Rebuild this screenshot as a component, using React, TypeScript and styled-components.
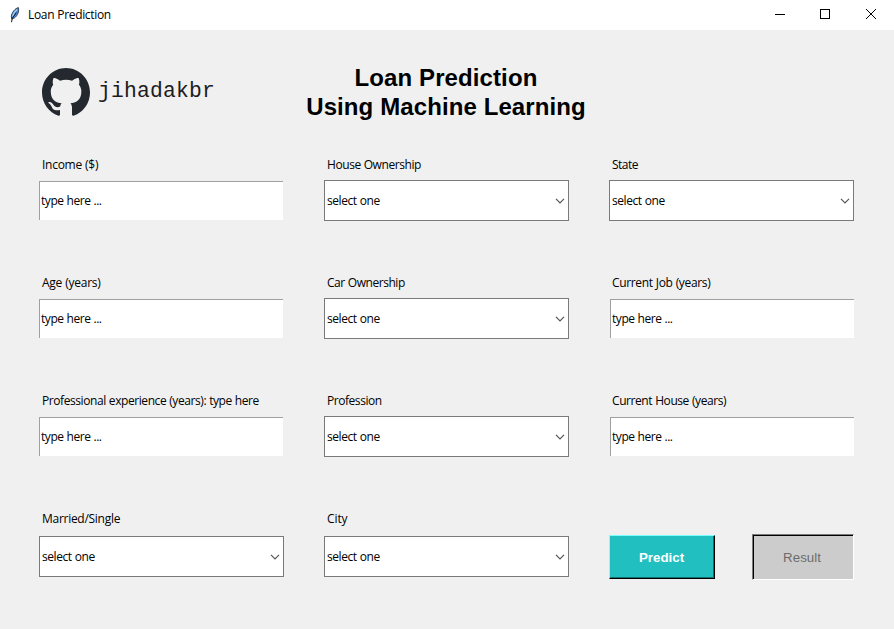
import React from "react";
import styled, { createGlobalStyle, css } from "styled-components";

const GlobalStyle = createGlobalStyle`
  *, *::before, *::after { box-sizing: border-box; }
  body { margin: 0; background: #f0f0f0; }
`;

const uiFont = css`
  font-family: "Open Sans", "Noto Sans", sans-serif;
  font-size: 12px;
  line-height: 16px;
  color: #000;
  white-space: pre;
`;

const Window = styled.div`
  width: 894px;
  height: 629px;
  overflow: hidden;
  display: flex;
  flex-direction: column;
  background: #f0f0f0;
`;

const TitleBar = styled.header`
  height: 30px;
  flex: none;
  display: flex;
  align-items: center;
  background: #fff;
  padding-left: 7px;
`;

const Text = styled.span<{ $track?: number }>`
  ${uiFont}
  letter-spacing: ${(p) => p.$track ?? -0.42}px;
  word-spacing: 0.3px;
`;

const Caption = styled(Text)`
  margin-left: 5px;
  flex: 1;
`;

const Controls = styled.div`
  display: flex;
  align-self: stretch;
`;

const ControlButton = styled.div`
  width: 46px;
  height: 30px;
  svg { display: block; }
`;

const Header = styled.div`
  display: flex;
  height: 127px;
  flex: none;
  padding-left: 42px;
`;

const Brand = styled.div`
  display: flex;
  width: 264px;
  height: 48px;
  margin-top: 38px;
`;

const UserName = styled.span`
  font: 21.33px/24px "Liberation Mono", "Courier New", monospace;
  letter-spacing: 0.2px;
  color: #1c1c1c;
  margin: 11px 0 0 8px;
`;

const Heading = styled.h1`
  margin: 33px 0 0;
  width: 280px;
  font: bold 24px/29px "Liberation Sans", Arial, sans-serif;
  letter-spacing: 0.1px;
  text-align: center;
  white-space: nowrap;
  color: #000;
`;

const Form = styled.main`
  display: grid;
  grid-template-columns: repeat(3, 245px);
  grid-auto-rows: 118px;
  column-gap: 40px;
  padding-left: 39px;
`;

const Cell = styled.div<{ $last?: boolean }>`
  display: flex;
  flex-direction: column;
  gap: ${(p) => (p.$last ? 9 : 7)}px;
`;

const Label = styled(Text)`
  padding-left: 3px;
`;

const Entry = styled.div<{ $shift: number }>`
  width: 244px;
  height: 39px;
  margin: 1px 0 0 ${(p) => p.$shift}px;
  display: flex;
  align-items: center;
  padding-left: 1px;
  background: #fff;
  border-top: 1px solid #a0a0a0;
  border-left: 1px solid #a0a0a0;
`;

const Combo = styled.div`
  width: 245px;
  height: 41px;
  display: flex;
  align-items: center;
  justify-content: space-between;
  padding: 0 3px 0 2px;
  background: #fff;
  border: 1px solid #7a7a7a;
`;

const Actions = styled.div`
  display: flex;
  align-items: flex-start;
  gap: 37px;
  padding-top: 23px;
`;

const buttonBase = css`
  display: flex;
  align-items: center;
  justify-content: center;
  font-family: "Liberation Sans", Arial, sans-serif;
  font-size: 13.33px;
  line-height: 16px;
  border-radius: 0;
`;

const PredictButton = styled.button`
  ${buttonBase}
  width: 106px;
  height: 44px;
  margin-top: 1px;
  padding: 2px 1px 0 0;
  font-weight: bold;
  color: #fff;
  background: #21bfbf;
  border: 1px solid;
  border-color: #7affff #000 #000 #7affff;
  box-shadow: inset -1px -1px 0 #137373;
`;

const ResultButton = styled.button`
  ${buttonBase}
  width: 102px;
  height: 46px;
  padding: 1px 2px 0 0;
  color: #6d6d6d;
  background: #ccc;
  border: 1px solid;
  border-color: #7a7a7a #fff #fff #7a7a7a;
  box-shadow: inset 1px 1px 0 #000;
`;

const Feather = () => (
  <svg width="16" height="16" viewBox="0 0 16 16">
    <path d="M11.4 .6C8.4 1.2 4.6 5.4 4.3 9.6L4.8 12L7.6 10.8C10.4 8.8 12.4 4.5 11.4 .6Z" fill="#4f8fd8" stroke="#26364a" strokeWidth=".9" />
    <path d="M10 2.6C8 4.2 6 7 5.5 9.4" fill="none" stroke="#a9cdf5" strokeWidth="1.3" />
    <path d="M9.4 5.6L5.3 11.2L4.5 15.2" fill="none" stroke="#111" strokeWidth="1" />
  </svg>
);

const GithubMark = () => (
  <svg width="48" height="49" viewBox="0 0 16 16" preserveAspectRatio="none" fill="#24292f">
    <path d="M8 0C3.58 0 0 3.58 0 8c0 3.54 2.29 6.53 5.47 7.59.4.07.55-.17.55-.38 0-.19-.01-.82-.01-1.49-2.01.37-2.53-.49-2.69-.94-.09-.23-.48-.94-.82-1.13-.28-.15-.68-.52-.01-.53.63-.01 1.08.58 1.23.82.72 1.21 1.87.87 2.33.66.07-.52.28-.87.51-1.07-1.78-.2-3.64-.89-3.64-3.95 0-.87.31-1.59.82-2.15-.08-.2-.36-1.02.08-2.12 0 0 .67-.21 2.2.82.64-.18 1.32-.27 2-.27s1.36.09 2 .27c1.53-1.04 2.2-.82 2.2-.82.44 1.1.16 1.92.08 2.12.51.56.82 1.27.82 2.15 0 3.07-1.87 3.75-3.65 3.95.29.25.54.73.54 1.48 0 1.07-.01 1.93-.01 2.2 0 .21.15.46.55.38A8.01 8.01 0 0 0 16 8c0-4.42-3.58-8-8-8z" />
  </svg>
);

const Chevron = () => (
  <svg width="10" height="6" viewBox="0 0 10 6">
    <path d="M1 .8L5 4.8L9 .8" fill="none" stroke="#555" strokeWidth="1.2" />
  </svg>
);

type Field = {
  label: string;
  kind: "entry" | "combo";
  track?: number;
  shift?: number;
  last?: boolean;
};

const fields: Field[] = [
  { label: "Income ($)", kind: "entry", track: -0.27 },
  { label: "House Ownership", kind: "combo", track: -0.43 },
  { label: "State", kind: "combo", track: -0.5 },
  { label: "Age (years)", kind: "entry", track: -0.25 },
  { label: "Car Ownership", kind: "combo", track: -0.45 },
  { label: "Current Job (years)", kind: "entry", shift: 1, track: -0.34 },
  { label: "Professional experience (years): type here", kind: "entry" },
  { label: "Profession", kind: "combo", track: -0.45 },
  { label: "Current House (years)", kind: "entry", shift: 1 },
  { label: "Married/Single", kind: "combo", last: true, track: -0.28 },
  { label: "City", kind: "combo", last: true, track: -0.1 },
];

const FormField = ({ label, kind, track, shift = 0, last }: Field) => (
  <Cell $last={last}>
    <Label $track={track}>{label}</Label>
    {kind === "entry" ? (
      <Entry $shift={shift}>
        <Text $track={-0.45}>type here ...</Text>
      </Entry>
    ) : (
      <Combo>
        <Text>select one</Text>
        <Chevron />
      </Combo>
    )}
  </Cell>
);

export default function App() {
  return (
    <Window>
      <GlobalStyle />
      <TitleBar>
        <Feather />
        <Caption $track={-0.33}>Loan Prediction</Caption>
        <Controls>
          <ControlButton>
            <svg width="46" height="30"><path d="M19 14.5h10" stroke="#000" /></svg>
          </ControlButton>
          <ControlButton>
            <svg width="46" height="30"><rect x="18.5" y="9.5" width="9" height="9" fill="none" stroke="#000" /></svg>
          </ControlButton>
          <ControlButton>
            <svg width="46" height="30"><path d="M18 9l10 10M28 9l-10 10" stroke="#000" /></svg>
          </ControlButton>
        </Controls>
      </TitleBar>
      <Header>
        <Brand>
          <GithubMark />
          <UserName>jihadakbr</UserName>
        </Brand>
        <Heading>Loan Prediction<br />Using Machine Learning</Heading>
      </Header>
      <Form>
        {fields.map((f) => (
          <FormField key={f.label} {...f} />
        ))}
        <Actions>
          <PredictButton>Predict</PredictButton>
          <ResultButton>Result</ResultButton>
        </Actions>
      </Form>
    </Window>
  );
}
